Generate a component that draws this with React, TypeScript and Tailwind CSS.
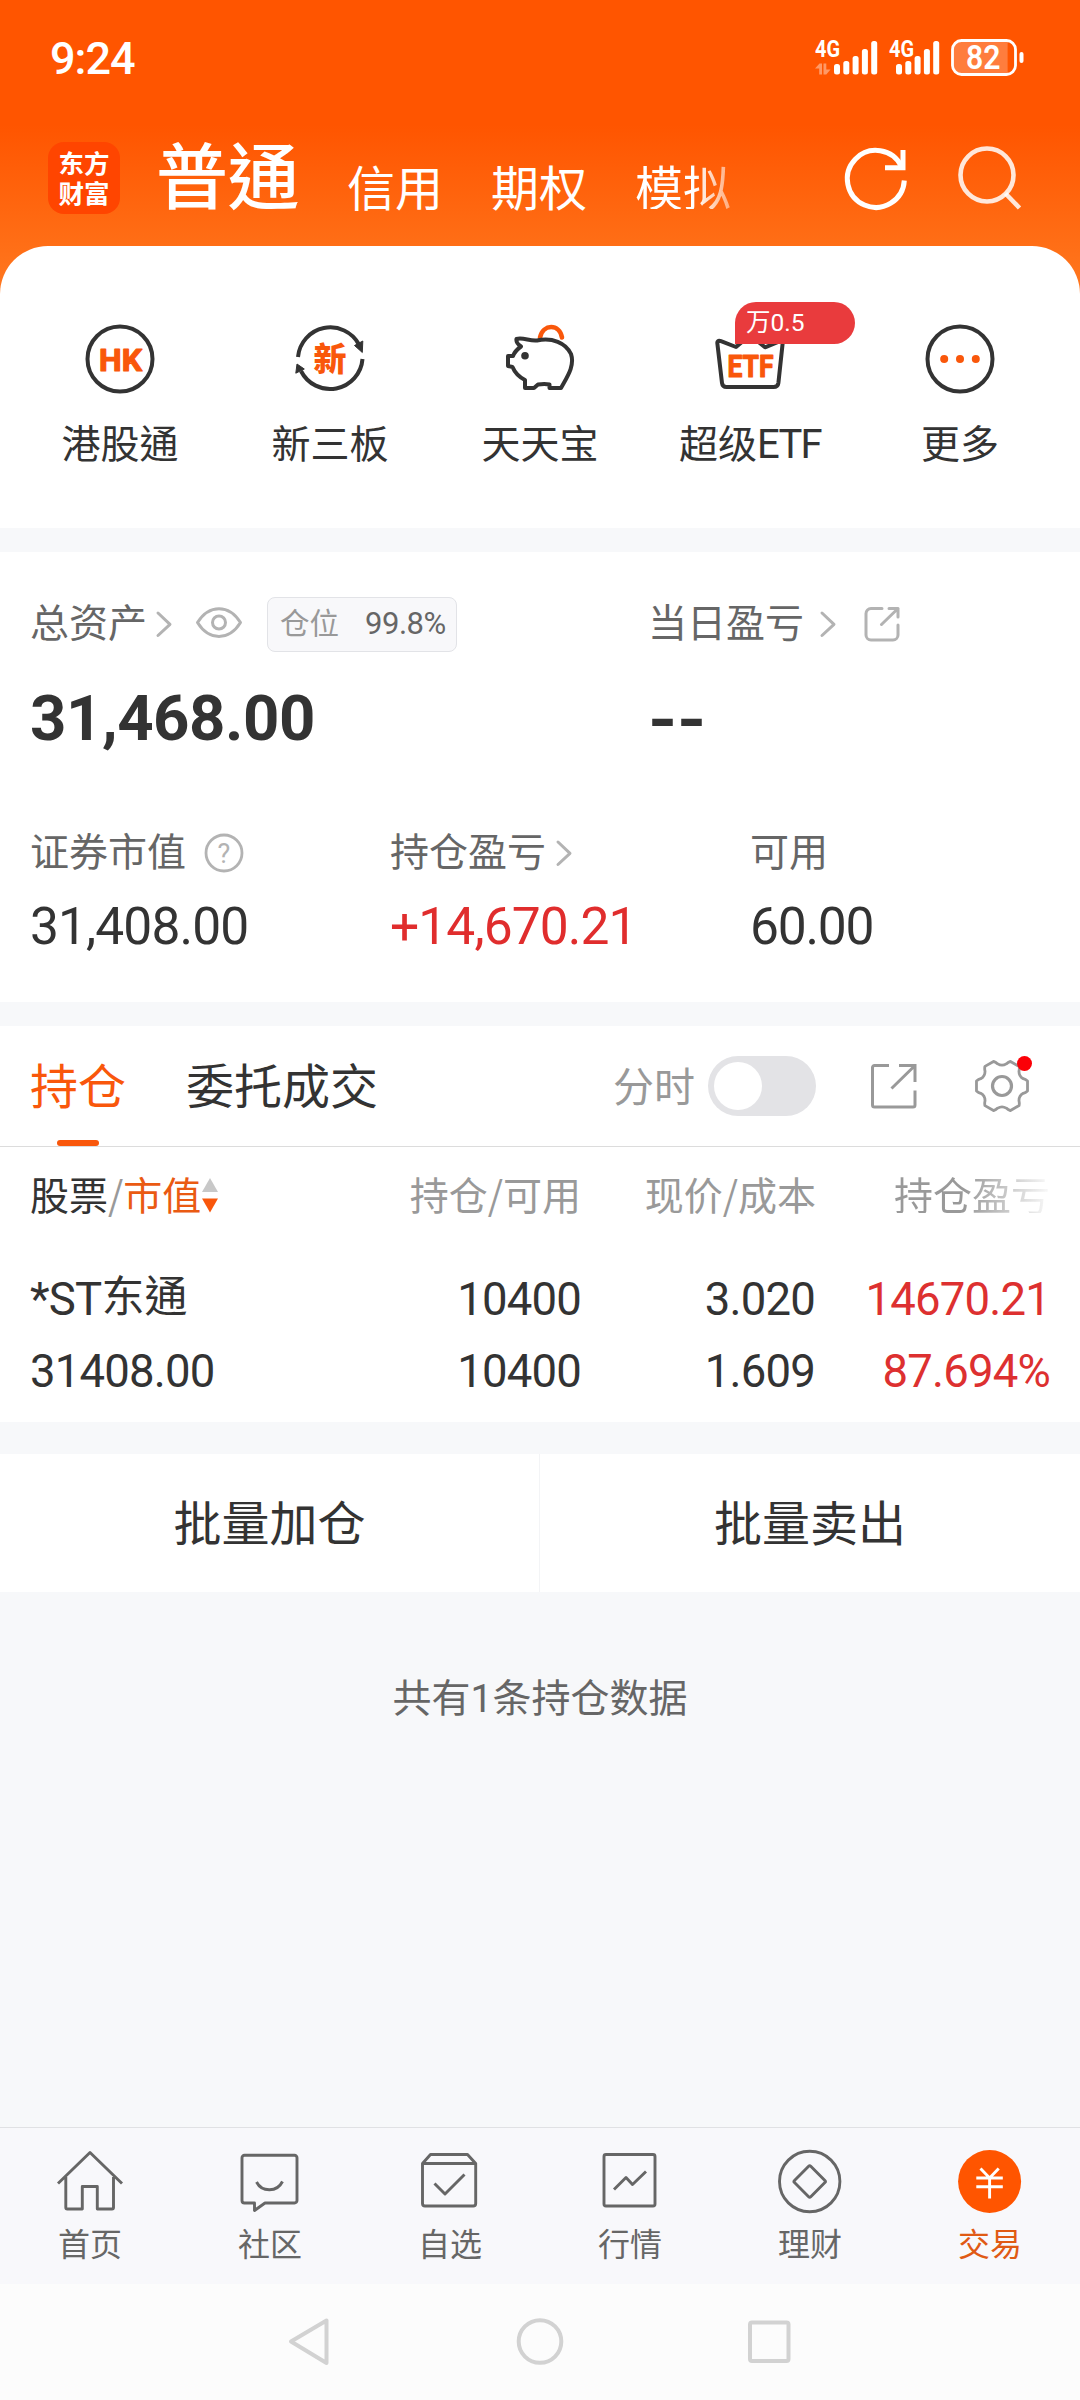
import React from "react";

const CJK = "font-['Noto_Sans_CJK_SC',sans-serif]";
const TC = "font-['Noto_Sans_CJK_TC',sans-serif]";
const NUM = "font-[Roboto,'Noto_Sans_CJK_SC',sans-serif]";

function Tong() {
  return <span className={TC}>通</span>;
}

function Bars({ x }: { x: number }) {
  const tops = [63, 60, 55, 48, 40];
  return (
    <g fill="#fff">
      {tops.map((t, i) => (
        <rect key={t} x={x + i * 9.3} y={t - 30} width="6" height={73.5 - t} rx="2.5" />
      ))}
    </g>
  );
}

function StatusIcons() {
  return (
    <svg width="214" height="54" viewBox="0 0 214 54" fill="none">
      <text x="0" y="26" textLength="25" lengthAdjust="spacingAndGlyphs" fontFamily="Roboto" fontSize="23" fontWeight="700" fill="#fff">4G</text>
      <g fill="#fff" fillOpacity="0.4">
        <path d="M0 37.500L4.500 32.500H7V43.500H4.200V37.500zM8.500 32.500H11.300V38.500H15.500L11.300 43.500H8.500z" />
      </g>
      <Bars x={19} />
      <text x="74" y="26" textLength="25" lengthAdjust="spacingAndGlyphs" fontFamily="Roboto" fontSize="23" fontWeight="700" fill="#fff">4G</text>
      <Bars x={81} />
      <path d="M145 10h47.600v33H145a7 7 0 0 1-7-7V17a7 7 0 0 1 7-7z" fill="#fff" fillOpacity="0.24" />
      <rect x="137.500" y="9.500" width="63" height="34" rx="9" stroke="#fff" strokeWidth="2.800" />
      <rect x="204.500" y="21" width="4" height="11" rx="2" fill="#fff" />
      <text x="151" y="38" textLength="34.500" lengthAdjust="spacingAndGlyphs" fontFamily="Roboto" fontSize="33" fontWeight="600" fill="#fff">82</text>
    </svg>
  );
}

function Header() {
  return (
    <header className="h-[246px] text-white">
      <div className="flex h-[116px] items-center justify-between pl-[50px] pr-[51px]">
        <span className={`${NUM} text-[45px] leading-[45px] font-medium tracking-[-1px]`}>9:24</span>
        <StatusIcons />
      </div>
      <div className="flex items-start pl-12">
        <div className={`${CJK} mt-[26px] h-[72px] w-[72px] rounded-2xl bg-[#ff4500] pt-[5px] text-center text-[25.500px] leading-[30px] font-bold`}>
          东方<br />财富
        </div>
        <nav className={`${CJK} ml-[36px] flex w-[617px] items-start whitespace-nowrap`}>
          <span className="mt-5 text-[72px] leading-[72px] font-medium tracking-[-0.500px]">普<Tong /></span>
          <span className="mt-[45px] ml-[48px] text-[48px] leading-[48px]">信用</span>
          <span className="mt-[45px] ml-12 text-[48px] leading-[48px]">期权</span>
          <span className="mt-[45px] ml-12 bg-linear-to-r from-white from-62% to-white/45 bg-clip-text text-[48px] leading-[48px] text-transparent">模拟</span>
        </nav>
        <svg className="mt-[27px] ml-[67px]" width="72" height="72" viewBox="840 143 72 72" fill="none" stroke="#fff" strokeWidth="5">
          <path d="M904.300 180.500A28.500 28.500 0 1 1 901.500 166.500" />
          <path d="M903 150v18.200M885 167.800h20.500" />
        </svg>
        <svg className="mt-[27px] ml-[43px]" width="70" height="72" viewBox="955 143 70 72" fill="none" stroke="#fff" strokeOpacity="0.85" strokeWidth="4.600">
          <circle cx="987" cy="175" r="26.500" />
          <path d="M1005.500 193.500l14 14.500" />
        </svg>
      </div>
    </header>
  );
}

const INK = "#333";
const HOT = "#f9570b";

function HkIcon() {
  return (
    <svg width="70" height="70" viewBox="0 0 70 70" fill="none">
      <circle cx="35" cy="35" r="32.500" stroke={INK} strokeWidth="4" />
      <text x="14" y="46.500" textLength="43" lengthAdjust="spacingAndGlyphs" fontFamily="Roboto" fontWeight="700" fontSize="32" fill={HOT} stroke={HOT} strokeWidth="1.200" strokeLinejoin="round">HK</text>
    </svg>
  );
}

function NewIcon() {
  return (
    <svg width="70" height="70" viewBox="295 324 70 70" fill="none">
      <path d="M298 357A32.500 32.500 0 0 1 359 344.500M362.500 359A32.500 32.500 0 0 1 301 371" stroke={INK} strokeWidth="4" />
      <path d="M354.500 345.500l8.300-4.500-.5 11.500zM297 364l7.300 5-8.500 4.200z" fill={INK} stroke={INK} strokeLinejoin="round" />
      <text x="313.500" y="370.500" fontFamily="Noto Sans CJK SC" fontWeight="900" fontSize="33" fill={HOT}>新</text>
    </svg>
  );
}

function PigIcon() {
  return (
    <svg width="70" height="70" viewBox="505 324 70 70" fill="none" strokeWidth="4">
      <path d="M540 337.500C543 323.500 559.500 323.500 562 337.500" stroke={HOT} strokeWidth="4.600" strokeLinecap="round" />
      <path d="M516.500 339C523 337 530 341.500 537 340.500C552 337 566 343 571 354C575 366 567 377 561 388H549.500V384.500C545 383.500 541 384 538 384.500L534 388H525V380C519 377 515 373 512.500 367L508 366V356H513C514.500 352 517.500 349 521 346.500C518 344.500 516 341.500 516.500 339z" stroke={INK} strokeLinejoin="round" />
      <circle cx="525" cy="355.700" r="3.800" fill={INK} />
    </svg>
  );
}

function EtfIcon() {
  return (
    <svg width="70" height="70" viewBox="715 324 70 70" fill="none">
      <path d="M736 347l-15-5.800c-3-1-4 .3-3.600 2.500l4.600 39.300c.4 3 1.600 4 4.500 4h47c3 0 4.500-1 4.900-4l4.600-43-18 7.300-15-12z" stroke={INK} strokeWidth="4" strokeLinejoin="round" />
      <text x="727.500" y="376.500" textLength="46" lengthAdjust="spacingAndGlyphs" fontFamily="Roboto" fontWeight="700" fontSize="32" fill={HOT} stroke={HOT} strokeWidth="1.200" strokeLinejoin="round">ETF</text>
    </svg>
  );
}

function MoreIcon() {
  return (
    <svg width="70" height="70" viewBox="0 0 70 70">
      <circle cx="35" cy="35" r="32.500" fill="none" stroke={INK} strokeWidth="4" />
      <g fill={HOT}>
        <circle cx="19.200" cy="35" r="4" />
        <circle cx="35" cy="35" r="4" />
        <circle cx="50.800" cy="35" r="4" />
      </g>
    </svg>
  );
}

function QuickEntries() {
  const items: { icon: React.ReactNode; label: React.ReactNode; badge?: string }[] = [
    { icon: <HkIcon />, label: <>港股<Tong /></> },
    { icon: <NewIcon />, label: "新三板" },
    { icon: <PigIcon />, label: "天天宝" },
    { icon: <EtfIcon />, label: <>超级<span className="font-[Roboto] text-[40px] tracking-[-1.700px]">ETF</span></>, badge: "万0.5" },
    { icon: <MoreIcon />, label: "更多" },
  ];
  return (
    <section className="flex h-[282px] rounded-t-[48px] bg-white px-[15px] pt-[78px]">
      {items.map((item, i) => (
        <div key={i} className="relative flex w-[210px] flex-col items-center">
          {item.icon}
          <span className={`${CJK} mt-[27px] text-[39px] leading-10 whitespace-nowrap text-[#333]`}>{item.label}</span>
          {item.badge && (
            <span className="absolute top-[-22px] left-[90px] h-[42px] w-[120px] rounded-[21px] rounded-bl-none bg-[#e93b3d] pl-[11px] font-[Roboto,'Noto_Sans_CJK_SC'] text-[24.500px] leading-[41px] text-white">
              {item.badge}
            </span>
          )}
        </div>
      ))}
    </section>
  );
}

function Chevron({ className }: { className: string }) {
  return (
    <svg className={className} width="18" height="28" viewBox="0 0 18 28" fill="none" stroke="#b3b3b3" strokeWidth="3" strokeLinecap="round" strokeLinejoin="round">
      <path d="M3 3l12 11.300L3 25.500" />
    </svg>
  );
}

function Label({ children }: { children: React.ReactNode }) {
  return <span className={`${CJK} pb-2 text-[39px] leading-10 whitespace-nowrap text-[#666]`}>{children}</span>;
}

function Assets() {
  return (
    <section className="h-[450px] bg-white pt-[42px] pl-[30px]">
      <div className="flex h-[60px] items-center">
        <div className="flex w-[618px] items-center">
          <Label>总资产</Label>
          <Chevron className="ml-[8px]" />
          <svg className="ml-[22px]" width="48" height="36" viewBox="0 0 48 36" fill="none" stroke="#b3b3b3" strokeWidth="3">
            <path d="M2.500 16.500C14-2 34-2 45.500 16.500C34 35 14 35 2.500 16.500z" strokeLinejoin="round" />
            <circle cx="24" cy="16.500" r="6.500" />
          </svg>
          <span className="ml-[24px] flex h-[55px] w-[190px] items-center rounded-lg border border-[#e2e3e7] bg-[#f8f8fa] pl-3">
            <span className={`${CJK} pb-[6px] text-[29.500px] leading-8 text-[#999]`}>仓位</span>
            <span className={`${NUM} ml-[26px] text-[31px] leading-8 tracking-[-0.500px] text-[#666]`}>99.8%</span>
          </span>
        </div>
        <Label>当日盈亏</Label>
        <Chevron className="ml-[15px]" />
        <svg className="ml-[27px]" width="36" height="36" viewBox="0 0 36 36" fill="none" stroke="#b3b3b3" strokeWidth="3" strokeLinecap="round" strokeLinejoin="round">
          <path d="M18 2.500H7a5 5 0 0 0-5 5V29a5 5 0 0 0 5 5h22a5 5 0 0 0 5-5V19M25 2.500h9V11M34 2.500L17.500 18.500" />
        </svg>
      </div>
      <div className="mt-[33px] flex text-[#333]">
        <span className={`${NUM} w-[618px] text-[63.500px] leading-[64px] font-bold tracking-[-0.450px]`}>31,468.00</span>
        <span className="font-[Inter] text-[62px] leading-[64px] font-bold">--</span>
      </div>
      <div className="mt-[80px] flex h-11 items-center">
        <div className="flex w-[360px] items-center">
          <Label>证券市值</Label>
          <svg className="ml-[18px]" width="40" height="40" viewBox="0 0 40 40" fill="none">
            <circle cx="20" cy="20" r="18" stroke="#b3b3b3" strokeWidth="2.800" />
            <text x="20" y="29.500" textAnchor="middle" fontFamily="Roboto" fontSize="27" fill="#b3b3b3">?</text>
          </svg>
        </div>
        <div className="flex w-[360px] items-center">
          <Label>持仓盈亏</Label>
          <Chevron className="ml-[9px]" />
        </div>
        <Label>可用</Label>
      </div>
      <div className={`${NUM} mt-[26px] flex text-[51.500px] leading-[52px] tracking-[-0.900px] text-[#333]`}>
        <span className="w-[360px]">31,408.00</span>
        <span className="w-[360px] text-[#e02d2d]">+14,670.21</span>
        <span className="tracking-[-1.200px]">60.00</span>
      </div>
    </section>
  );
}

function GearIcon() {
  const pts: string[] = [];
  const n = 6;
  for (let i = 0; i < n; i++) {
    const at = (deg: number, r: number) => {
      const a = ((i * 60 + deg) * Math.PI) / 180;
      return `${(28 + r * Math.cos(a)).toFixed(2)} ${(28 + r * Math.sin(a)).toFixed(2)}`;
    };
    pts.push(`${i === 0 ? "M" : "L"}${at(-11, 26)}L${at(11, 26)}Q${at(16, 24.500)} ${at(19, 22.500)}Q${at(30, 19.500)} ${at(41, 22.500)}Q${at(44, 24.500)} ${at(49, 26)}`);
  }
  return (
    <svg width="56" height="56" viewBox="0 0 56 56" fill="none" stroke="#999" strokeWidth="2.800" strokeLinejoin="round">
      <path d={pts.join("") + "Z"} />
      <circle cx="28" cy="28" r="9.500" strokeWidth="3.200" />
    </svg>
  );
}

function HoldingsTabs() {
  return (
    <div className={`${CJK} flex h-[121px] items-start border-b border-[#dcdcdc] pl-[30px]`}>
      <div className="flex w-24 flex-col items-center text-[48px] text-[#f9570b]">
        <span className="mt-[32px] leading-[50px]">持仓</span>
        <span className="mt-8 h-[6px] w-[42px] rounded-[3px] bg-[#f9570b]" />
      </div>
      <span className="mt-[32px] ml-[60px] w-[427px] text-[48px] leading-[50px] text-[#333]">委托成交</span>
      <span className="mt-[37px] text-[41px] leading-[42px] text-[#999]">分时</span>
      <span className="mt-[30px] ml-[13px] flex h-[60px] w-[108px] items-center rounded-[30px] bg-[#e3e3e6] pl-[6px]">
        <span className="h-12 w-12 rounded-full bg-white" />
      </span>
      <svg className="mt-9 ml-[54px]" width="48" height="48" viewBox="0 0 48 48" fill="none" stroke="#999" strokeWidth="3">
        <path d="M19 3.500H4.500a2 2 0 0 0-2 2V43a2 2 0 0 0 2 2H43a2 2 0 0 0 2-2V28.500M29 3.500h16V20M44.500 4L21.500 26.500" />
      </svg>
      <div className="relative mt-8 ml-14">
        <GearIcon />
        <span className="absolute -top-[2px] right-[-2px] h-[15px] w-[15px] rounded-full bg-[#fb0007]" />
      </div>
    </div>
  );
}

function HoldingsTable() {
  const rows: React.ReactNode[][] = [
    [<>*ST<span className="align-[3px] text-[43px] leading-none tracking-normal">东<Tong /></span></>, "10400", "3.020", "14670.21"],
    ["31408.00", "10400", "1.609", "87.694%"],
  ];
  return (
    <div className="pr-[30px] pl-[30px]">
      <div className={`${CJK} flex h-[92px] items-center text-[39px] leading-10 text-[#999]`}>
        <span className="flex w-[316px] items-center text-[#333]">
          <span>股票<span className="text-[#999]">/</span><span className="text-[#ea5a12]">市值</span></span>
          <svg className="mt-1" width="18" height="36" viewBox="0 0 18 36">
            <path d="M9 1l8 14H1z" fill="#c8c8c8" />
            <path d="M9 35.500l8-14H1z" fill="#f9570b" />
          </svg>
        </span>
        <span className="w-[235px] text-right">持仓/可用</span>
        <span className="w-[235px] text-right">现价/成本</span>
        <span className="ml-auto bg-linear-to-r from-[#999] from-45% to-[#999]/5 bg-clip-text text-transparent">持仓盈亏</span>
      </div>
      <div className={`${NUM} pt-[25px] text-[45.500px] leading-[72px] tracking-[-0.800px] text-[#333]`}>
        {rows.map((r, i) => (
          <div key={i} className="flex h-[72px] whitespace-nowrap">
            <span className="w-[316px]">{r[0]}</span>
            <span className="w-[235px] text-right">{r[1]}</span>
            <span className="w-[234px] text-right">{r[2]}</span>
            <span className="w-[235px] text-right text-[#dd3030]">{r[3]}</span>
          </div>
        ))}
      </div>
    </div>
  );
}

function Actions() {
  return (
    <section className={`${CJK} mt-8 flex h-[138px] bg-white text-center text-[48px] leading-[50px] text-[#333]`}>
      <span className="w-1/2 border-r border-[#f3f4f6] pt-[41px]">批量加仓</span>
      <span className="w-1/2 pt-[41px]">批量卖出</span>
    </section>
  );
}

function NavSvg({ children }: { children: React.ReactNode }) {
  return (
    <svg width="70" height="70" viewBox="0 0 70 70" fill="none" stroke="#666" strokeWidth="2.900" strokeLinejoin="round">
      {children}
    </svg>
  );
}

function BottomNav() {
  const items = [
    { label: "首页", icon: <path d="M3 38.500L35 7.500L67 38.500M10.800 32V62.500a1.500 1.500 0 0 0 1.500 1.500H27.300V41.500h15V64H57a1.500 1.500 0 0 0 1.500-1.500V32" /> },
    { label: "社区", icon: <><path d="M9.500 10.300H59.500a2.500 2.500 0 0 1 2.500 2.500V55.500a2.500 2.500 0 0 1-2.500 2.500H30L19.500 65.500V58H9.500a2.500 2.500 0 0 1-2.500-2.500V12.800a2.500 2.500 0 0 1 2.500-2.500z" /><path d="M21.500 37C27 47.500 42 47.500 47.500 36.500" /></> },
    { label: "自选", icon: <><path d="M7.500 18.500L15.500 9.500H52.500L60.700 18.500V58.500a2.500 2.500 0 0 1-2.500 2.500H10a2.500 2.500 0 0 1-2.500-2.500zM7.500 18.500H60.700" /><path d="M19.500 38.500L30 49L49.500 29.500" /></> },
    { label: "行情", icon: <><rect x="9" y="9.500" width="51" height="51.500" rx="2" /><path d="M19 44.500L31 32.500L37.500 39.500L51 26.500" /></> },
    { label: "理财", icon: <><circle cx="34.700" cy="36.500" r="30.200" /><rect x="-11.500" y="-11.500" width="23" height="23" rx="1.500" transform="translate(34.700 36.500) rotate(45)" /></> },
    { label: "交易", active: true, icon: <><circle cx="34.600" cy="36.500" r="31.500" fill="#ff5500" stroke="none" /><path d="M25.500 23.500L34.600 33L43.700 23.500M34.600 33V53.500M21.300 33H47.800M21.300 41.700H47.800" stroke="#fff" strokeLinejoin="miter" /></> },
  ];
  return (
    <nav className="flex h-[157px] border-t border-[#e0e1e4] bg-[#f8f8fb] pt-[17px]">
      {items.map((it) => (
        <div key={it.label} className="flex w-[180px] flex-col items-center">
          <NavSvg>{it.icon}</NavSvg>
          <span className={`${CJK} mt-[11px] text-[32px] leading-8 ${it.active ? "text-[#e05a14]" : "text-[#666]"}`}>{it.label}</span>
        </div>
      ))}
    </nav>
  );
}

function SystemBar() {
  return (
    <div className="flex h-[116px] items-start bg-[#fcfcfc] pt-[29px] pl-[280px]">
      <svg width="56" height="56" viewBox="0 0 56 56" fill="none" stroke="#d2d2d2" strokeWidth="4" strokeLinejoin="round">
        <path d="M11 28.500L46.500 7.500V50z" />
      </svg>
      <svg className="ml-[176px]" width="56" height="56" viewBox="0 0 56 56" fill="none" stroke="#d2d2d2" strokeWidth="4">
        <circle cx="28" cy="28.500" r="21.300" />
      </svg>
      <svg className="ml-[173px]" width="56" height="56" viewBox="0 0 56 56" fill="none" stroke="#d2d2d2" strokeWidth="4">
        <rect x="9" y="9.500" width="38.500" height="38.500" rx="2" />
      </svg>
    </div>
  );
}

export default function App() {
  return (
    <div className="flex h-[2400px] w-[1080px] flex-col overflow-hidden bg-[#f7f8fa]">
      <div className="bg-[linear-gradient(180deg,#ff5500_0px,#ff5500_125px,#ff6f17_250px,#ff7a22_300px)]">
        <Header />
        <QuickEntries />
      </div>
      <div className="h-6" />
      <Assets />
      <div className="h-6" />
      <section className="h-[396px] bg-white">
        <HoldingsTabs />
        <HoldingsTable />
      </section>
      <Actions />
      <p className={`${CJK} mt-[83px] text-center text-[39px] leading-10 text-[#666]`}>
        共有<span className="font-[Roboto]">1</span>条持仓数据
      </p>
      <div className="mt-auto">
        <BottomNav />
        <SystemBar />
      </div>
    </div>
  );
}
